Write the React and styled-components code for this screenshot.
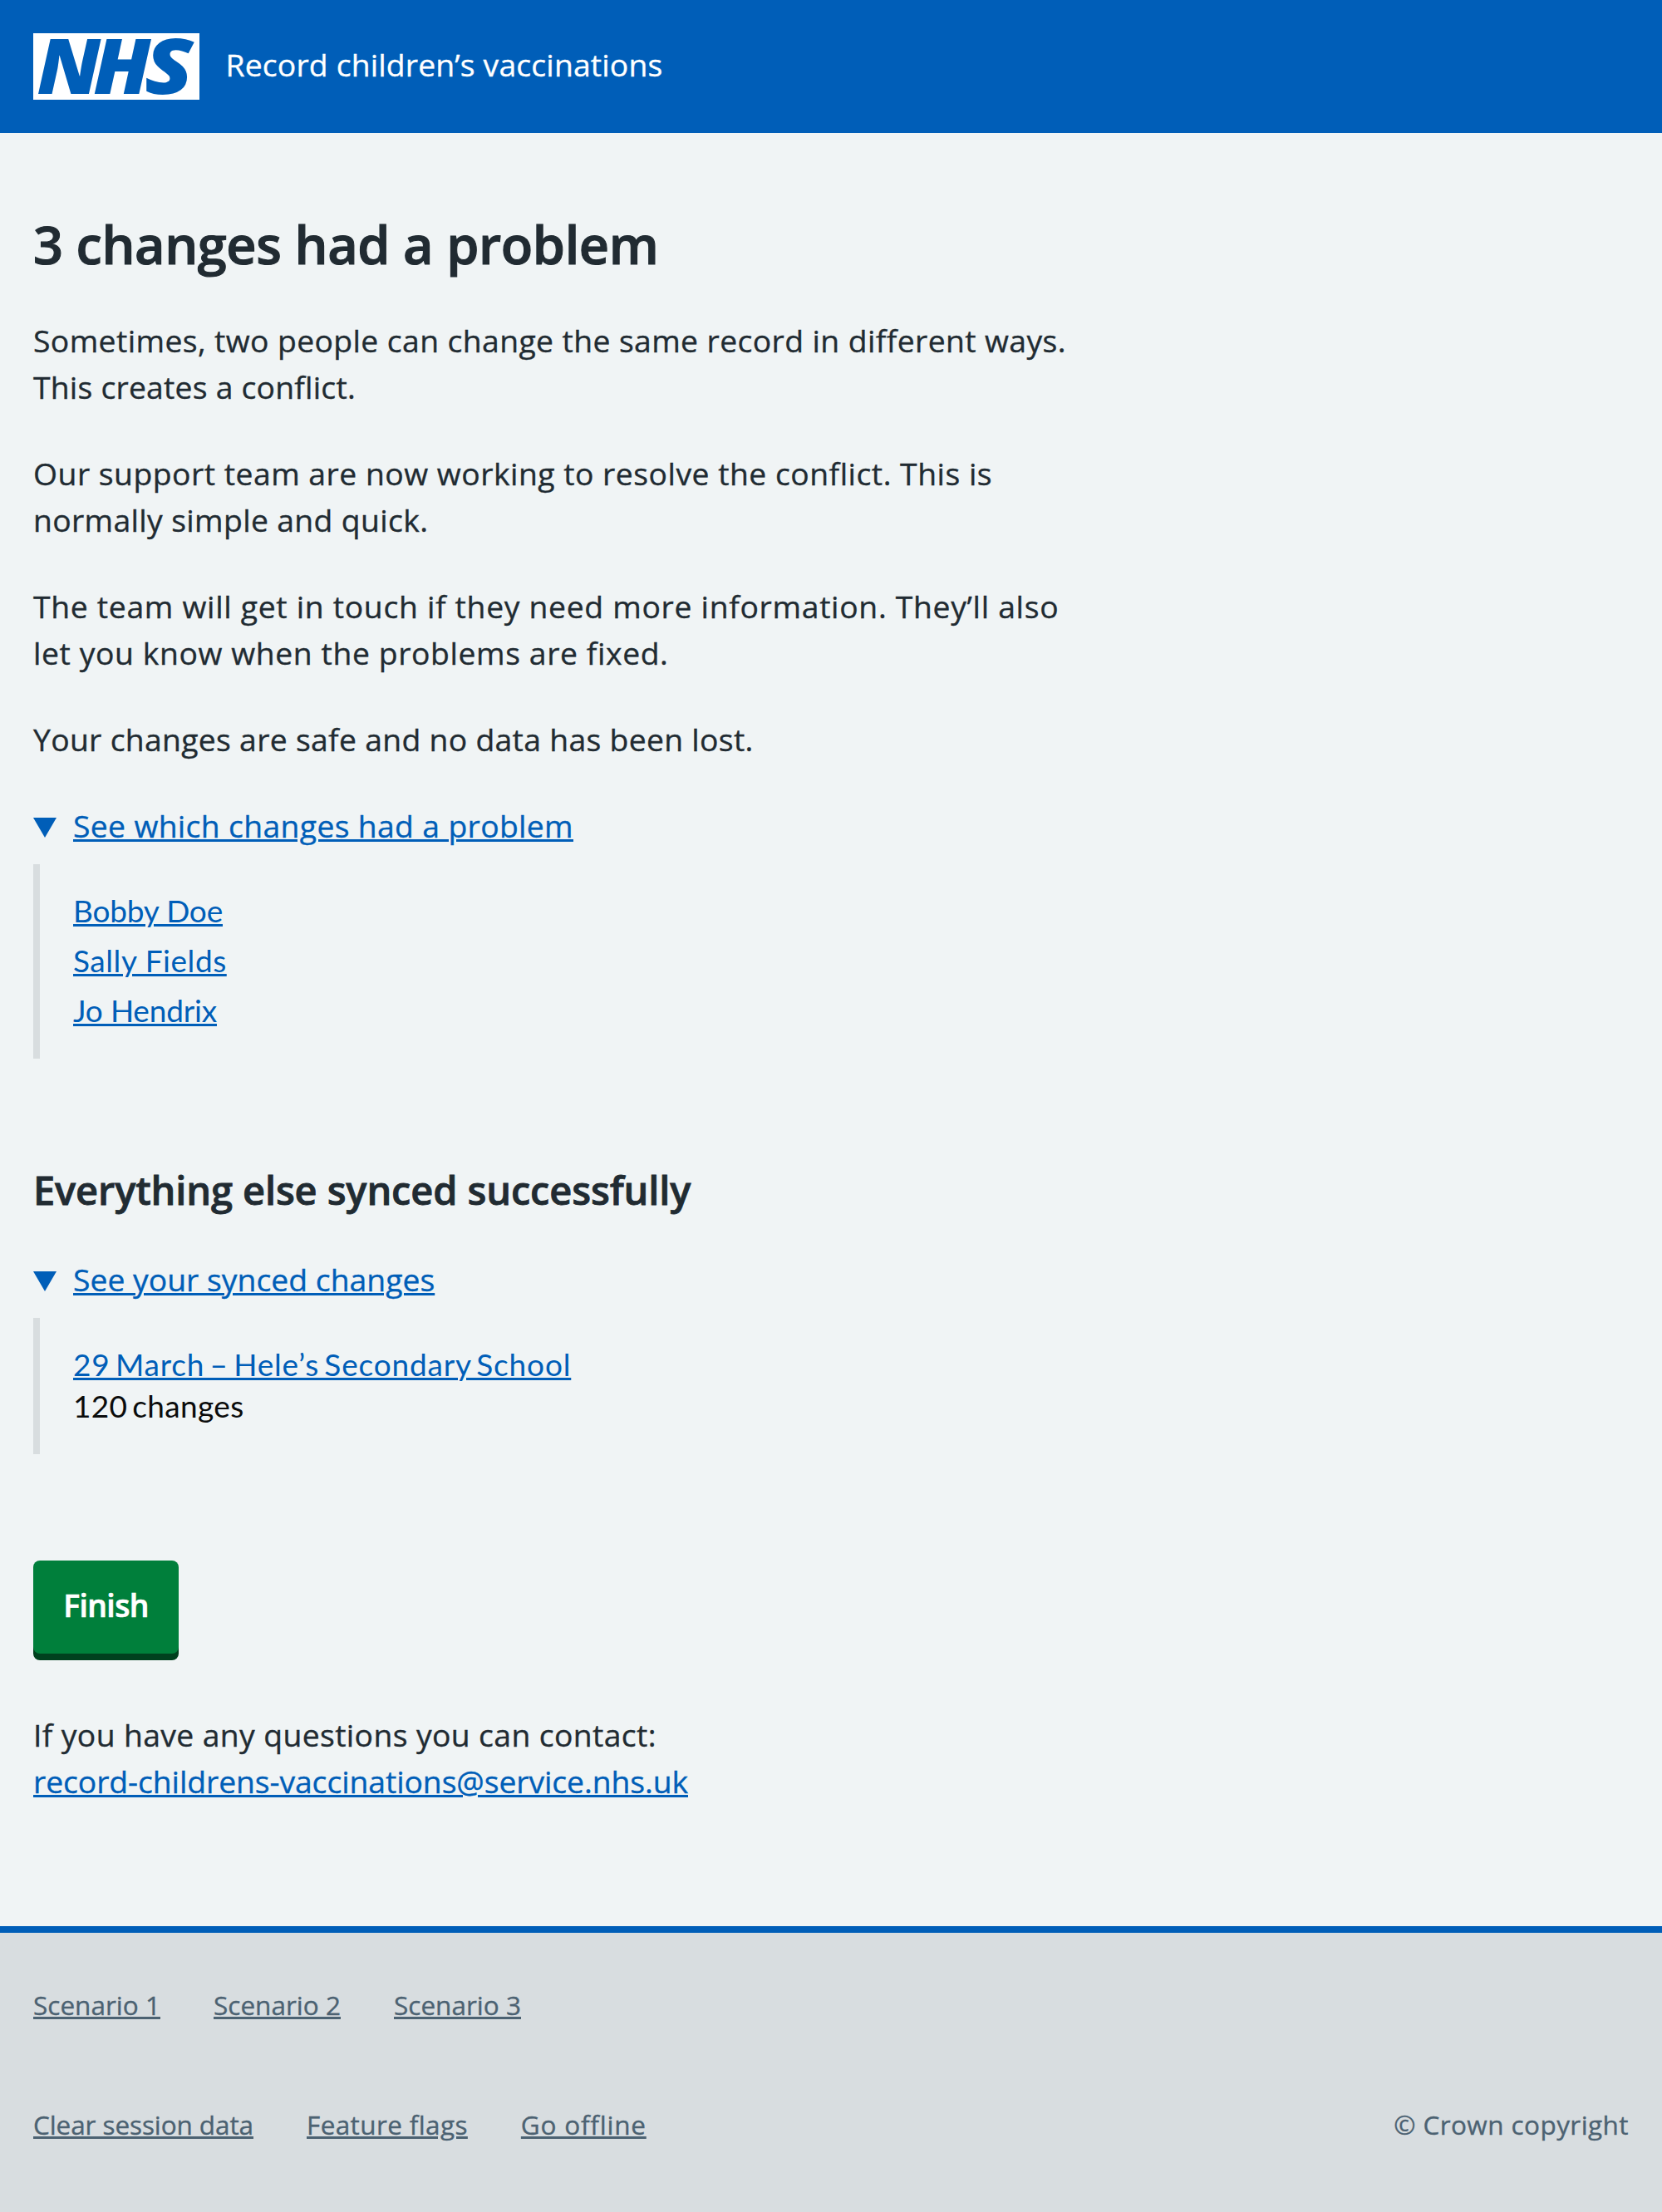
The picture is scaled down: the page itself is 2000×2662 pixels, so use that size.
import React from "react";
import styled, { createGlobalStyle } from "styled-components";

const blue = "#005eb8";
const ink = "#212b32";
const sans = '"Open Sans", "Noto Sans", sans-serif';

const GlobalStyle = createGlobalStyle`
  body {
    margin: 0;
    background: #f0f4f5;
    color: ${ink};
    font-family: ${sans};
    font-size: 37.3px;
    line-height: 56px;
    font-kerning: normal;
    -webkit-text-stroke: 0.35px currentColor;
  }
`;

const Page = styled.div`
  display: flex;
  flex-direction: column;
  min-height: 2662px;
`;

const Header = styled.header`
  box-sizing: border-box;
  height: 160px;
  padding: 40px;
  display: flex;
  align-items: center;
  gap: 31.5px;
  background: ${blue};
  color: #fff;
`;

const Logo = styled.svg`
  display: block;
  width: 200px;
  height: 80px;
  flex: none;
  overflow: visible;
  -webkit-text-stroke: 0;
`;

const LogoLetter = styled.text`
  font-family: ${sans};
  font-size: 91.5px;
  font-weight: 800;
  font-style: italic;
  fill: ${blue};
`;

const ServiceName = styled.span`
  padding-bottom: 5px;
  letter-spacing: 0.16px;
`;

const Main = styled.main`
  flex: 1;
  padding: 96px 40px 0;
`;

const Title = styled.h1`
  margin: 0 0 50px;
  font-size: 63px;
  font-weight: 600;
  line-height: 76px;
  letter-spacing: -0.4px;
  -webkit-text-stroke: 1.1px currentColor;
`;

const Subtitle = styled.h2`
  margin: 126px 0 48px;
  font-size: 47px;
  font-weight: 600;
  line-height: 64px;
  letter-spacing: -0.14px;
  -webkit-text-stroke: 0.8px currentColor;
`;

const Paragraph = styled.p`
  margin: ${(p) => p.$top || 0}px 0 48px;
`;

const Line = styled.span`
  display: block;
  white-space: nowrap;
  letter-spacing: ${(p) => p.$track}px;
`;

const Link = styled.a`
  color: ${(p) => p.$color || blue};
  letter-spacing: ${(p) => p.$track || 0}px;
  text-decoration: underline;
  text-decoration-thickness: 3px;
  text-underline-offset: 2px;
  white-space: nowrap;
`;

const Summary = styled.div`
  display: flex;
  align-items: center;
  gap: 20px;
  margin-bottom: 18px;
`;

const Arrow = styled.span`
  width: 0;
  height: 0;
  margin-top: 4px;
  border: 14px solid transparent;
  border-top: 24px solid ${blue};
  border-bottom: 0;
`;

const DetailsText = styled.div`
  box-sizing: border-box;
  width: 1280px;
  padding: 31px 40px 33px;
  border-left: 8px solid #d8dddf;
  color: #0b0c0c;
  font-family: Lato, sans-serif;
  font-size: 37px;
  line-height: 50px;
  word-spacing: ${(p) => p.$wordSpacing || 0}px;
  -webkit-text-stroke: 0;
`;

const List = styled.ul`
  list-style: none;
  margin: 0;
  padding: 0;
  display: flex;
  flex-direction: column;
  gap: 10px;
`;

const Button = styled.button`
  display: flex;
  align-items: center;
  justify-content: center;
  box-sizing: border-box;
  width: 175px;
  height: 112px;
  margin: 128px 0 0;
  padding: 0 0 5px;
  border: 0;
  border-radius: 8px;
  background: #007f3b;
  box-shadow: 0 8px 0 #00401e;
  color: #fff;
  font: 600 37.3px/56px ${sans};
  letter-spacing: -0.6px;
  -webkit-text-stroke: 0.7px currentColor;
`;

const Footer = styled.footer`
  box-sizing: border-box;
  height: 344px;
  padding: 63px 40px 0;
  border-top: 8px solid ${blue};
  background: #d8dde0;
  color: #4c6272;
  font-size: 31.5px;
  line-height: 48px;
`;

const FooterRow = styled.div`
  display: flex;
  gap: 64px;
  margin-bottom: 96px;
`;

const Copyright = styled.span`
  margin-left: auto;
  letter-spacing: 0.43px;
`;

const PARAGRAPHS = [
  [
    ["Sometimes, two people can change the same record in different ways.", 0.397],
    ["This creates a conflict.", 0.22],
  ],
  [
    ["Our support team are now working to resolve the conflict. This is", 0.496],
    ["normally simple and quick.", 0.355],
  ],
  [
    ["The team will get in touch if they need more information. They’ll also", 0.69],
    ["let you know when the problems are fixed.", 0.6],
  ],
  [["Your changes are safe and no data has been lost.", 0.309]],
];

const CONFLICTS = [
  ["Bobby Doe", -0.18],
  ["Sally Fields", 0.56],
  ["Jo Hendrix", -0.18],
];

const SCENARIOS = [
  ["Scenario 1", 0.016],
  ["Scenario 2", 0.016],
  ["Scenario 3", 0.016],
];

const TOOLS = [
  ["Clear session data", -0.093],
  ["Feature flags", 0.38],
  ["Go offline", 0.78],
];

function NhsLogo() {
  return (
    <Logo viewBox="0 0 200 80" role="img" aria-label="NHS">
      <rect width="200" height="80" fill="#fff" />
      <LogoLetter transform="translate(4.6 72.7) scale(1.06 1)">N</LogoLetter>
      <LogoLetter transform="translate(72.3 72.7) scale(1.06 1)">H</LogoLetter>
      <LogoLetter transform="translate(134 72.7) scale(1.17 1)">S</LogoLetter>
    </Logo>
  );
}

function FooterLinks({ items }) {
  return items.map(([label, track]) => (
    <Link key={label} $color="#4c6272" $track={track}>
      {label}
    </Link>
  ));
}

export default function App() {
  return (
    <Page>
      <GlobalStyle />
      <Header>
        <NhsLogo />
        <ServiceName>Record children’s vaccinations</ServiceName>
      </Header>
      <Main>
        <Title>3 changes had a problem</Title>
        {PARAGRAPHS.map((lines) => (
          <Paragraph key={lines[0][0]}>
            {lines.map(([text, track]) => (
              <Line key={text} $track={track}>
                {text}
              </Line>
            ))}
          </Paragraph>
        ))}
        <Summary>
          <Arrow />
          <Link $track={0.343}>See which changes had a problem</Link>
        </Summary>
        <DetailsText>
          <List>
            {CONFLICTS.map(([name, track]) => (
              <li key={name}>
                <Link $track={track}>{name}</Link>
              </li>
            ))}
          </List>
        </DetailsText>
        <Subtitle>Everything else synced successfully</Subtitle>
        <Summary>
          <Arrow />
          <Link $track={0.013}>See your synced changes</Link>
        </Summary>
        <DetailsText $wordSpacing={-4}>
          <Link $track={0.83}>29 March – Hele’s Secondary School</Link>
          <Line $track={0.35}>120 changes</Line>
        </DetailsText>
        <Button>Finish</Button>
        <Paragraph $top={70}>
          <Line $track={0.379}>If you have any questions you can contact:</Line>
          <Link $track={-0.08}>record-childrens-vaccinations@service.nhs.uk</Link>
        </Paragraph>
      </Main>
      <Footer>
        <FooterRow>
          <FooterLinks items={SCENARIOS} />
        </FooterRow>
        <FooterRow>
          <FooterLinks items={TOOLS} />
          <Copyright>© Crown copyright</Copyright>
        </FooterRow>
      </Footer>
    </Page>
  );
}
